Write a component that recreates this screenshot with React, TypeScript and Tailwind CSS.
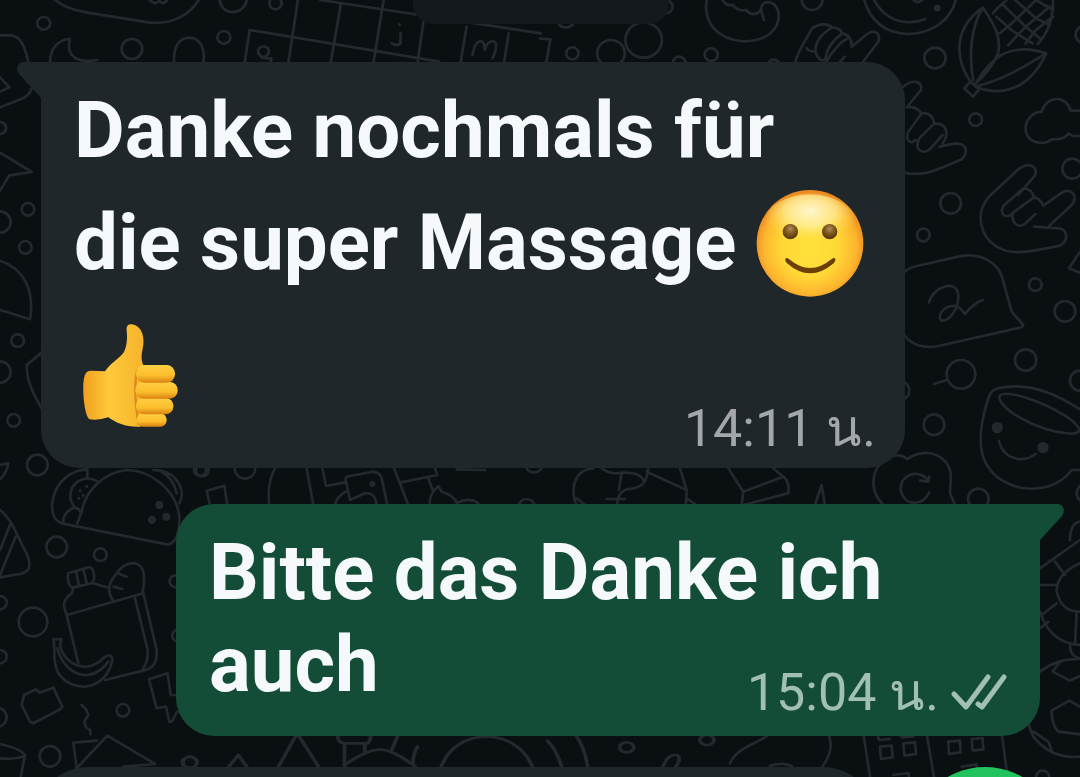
import type { ReactNode } from "react";

function Wallpaper() {
  return (
    <svg
      aria-hidden="true"
      viewBox="0 0 1080 777"
      preserveAspectRatio="xMidYMid slice"
      className="absolute inset-0 h-full w-full"
      fill="none"
      stroke="#23292c"
      strokeWidth="8"
      strokeLinecap="round"
      strokeLinejoin="round"
    >
      {/* top left: cloud, moon, crossword */}
      <g transform="matrix(.3444 0 0 .3333 0 0)">
        <path d="M155 -5 C180 20 210 30 250 37 L430 67 C500 75 555 45 582 -10 M435 2 L450 10 L462 4 L475 10 L485 2" />
        <path d="M0 106 H30 C65 108 75 150 83 190 M0 232 L27 262 L0 275 M0 322 L60 298 Q85 288 92 265 M0 458 L92 516 L27 526 L0 572" />
        <path d="M145 190 C145 145 170 118 203 117 C190 170 225 190 282 180 M505 190 C503 140 520 113 550 113 C585 115 597 150 590 190 M637 -5 C640 50 710 50 718 -5" />
        <circle cx="127" cy="70" r="19" />
        <circle cx="383" cy="147" r="30" />
        <circle cx="650" cy="112" r="19" />
        <circle cx="800" cy="10" r="18" />
        <circle cx="0" cy="384" r="18" />
        <path d="M710 190 L725 90 L1275 185 M865 0 L837 190 M990 10 L960 190 M1114 0 L1084 190 M930 0 L1570 100 M1230 62 L1213 185 M1355 80 L1337 190 M1477 100 L1463 190" />
        <path d="M785 190 L788 175 C740 180 740 135 770 140 C790 150 780 170 760 172 M1160 73 v2 M1163 100 V130 Q1150 140 1138 130 M1372 165 C1380 115 1408 110 1408 150 C1415 115 1445 118 1440 140 Q1440 155 1430 175" />
      </g>

      {/* top right: fist, hands, corn */}
      <g transform="matrix(.3444 0 0 .3333 540 0)">
        <path d="M0 115 L30 118 L18 190 M485 -5 C470 70 520 120 590 124 C660 125 700 85 692 35 C680 -5 640 0 642 30 L650 60 M530 0 Q540 18 560 15 Q575 35 598 30 Q620 55 642 30" />
        <path d="M740 190 C750 145 780 110 790 85 C810 70 835 70 848 82 Q870 82 878 100 Q905 105 905 140 L950 102 C975 85 990 105 982 125 L937 187 M848 82 C820 100 800 125 800 150 C795 160 775 150 775 145 M878 100 C850 120 830 150 830 175 C820 190 805 175 800 155 M905 140 M830 187 C850 150 875 125 890 118 M870 187 L885 170" />
        <path d="M940 -5 C960 70 1010 100 1070 102 C1140 100 1195 60 1208 -5 M970 0 C1000 60 1060 80 1118 58 M1085 0 Q1097 12 1110 0" />
        <circle cx="1153" cy="24" r="6" fill="#23292c" />
        <path d="M1250 245 C1200 170 1205 80 1286 23 C1320 75 1340 110 1330 160 Q1310 210 1265 250 M1258 240 C1245 170 1250 80 1286 23 M1265 250 C1300 190 1350 120 1470 160 C1420 270 1340 290 1270 262 M1270 258 C1340 240 1390 210 1470 160" />
        <path d="M1232 265 L1250 245 L1275 268 L1257 290 Z M1315 40 C1330 20 1345 10 1355 0 M1490 0 C1490 60 1470 105 1445 132 M1325 50 L1375 95 L1430 130 M1345 15 L1410 80 L1455 118 M1380 0 L1440 55 L1480 75 M1440 0 L1490 30 M1335 100 L1375 65 L1440 0 M1360 135 L1410 80 L1480 20 M1410 130 L1440 90 L1490 50" />
        <circle cx="75" cy="58" r="25" />
        <circle cx="94" cy="160" r="18" />
        <circle cx="206" cy="160" r="40" />
        <circle cx="301" cy="120" r="53" />
        <circle cx="365" cy="20" r="20" />
        <circle cx="404" cy="188" r="18" />
        <circle cx="497" cy="164" r="19" />
        <circle cx="679" cy="197" r="18" />
        <circle cx="790" cy="0" r="30" />
        <circle cx="1147" cy="174" r="31" />
        <circle cx="1580" cy="104" r="25" />
      </g>

      {/* right side: hands, speech bubble, cup */}
      <g transform="translate(880 60) scale(.3333)">
        <path d="M70 80 C100 55 130 65 123 90 L80 142 Q105 135 125 160 Q155 155 163 190 Q205 190 198 232 L188 250 M125 160 L85 215 C75 240 90 255 107 240 M163 190 L118 235 C100 270 130 285 150 267 L188 225 M70 338 C130 350 160 335 245 298 C270 270 255 250 225 250 L178 260" />
        <path d="M600 152 L572 152 C560 105 500 105 485 155 C430 160 420 230 465 245 Q495 255 515 238 Q555 240 565 220 Q575 230 600 228" />
        <path d="M325 412 L415 328 C450 300 480 325 462 350 L415 405 M325 412 C285 460 300 530 350 560 C390 585 430 580 540 557 C570 540 560 505 535 505 L462 500 M430 385 Q455 385 462 412 Q480 415 490 437 L550 395 C580 385 595 415 573 437 L508 497 M430 385 L370 438 C355 465 385 480 400 457 L462 412 M400 457 C390 485 415 510 437 490 L466 462" />
        <path d="M70 640 Q80 625 110 618 L235 590 C305 575 360 610 370 665 L395 755 L430 795 L425 802 L175 858 C120 868 90 850 70 822 M147 727 C160 680 230 655 235 705 C237 750 205 785 185 782 C170 770 190 735 225 738 Q240 740 255 762 Q280 730 308 720" />
        <path d="M162 972 L200 960 M355 985 C330 990 325 1010 312 1060 C290 1160 305 1210 350 1250 C430 1310 530 1290 575 1230 H600 M355 985 C440 965 530 1000 610 1055 M358 1010 C370 985 480 1020 560 1070 C610 1105 610 1125 560 1120 C470 1110 360 1050 358 1010 M357 1143 C370 1200 430 1210 467 1182 M600 575 L567 625 L600 638" />
        <circle cx="352" cy="1103" r="13" fill="#23292c" />
        <circle cx="489" cy="1163" r="13" fill="#23292c" />
        <path d="M35 1190 Q60 1180 82 1197 C140 1155 220 1190 212 1260 L210 1300 L225 1335 M35 1190 C-30 1215 -35 1290 10 1335 M147 1297 C135 1335 75 1345 62 1290 C60 1245 110 1225 145 1260 M120 1262 L145 1265 L148 1250" />
        <circle cx="287" cy="179" r="19" />
        <circle cx="577" cy="326" r="30" />
        <circle cx="212" cy="430" r="31" />
        <circle cx="130" cy="525" r="19" />
        <circle cx="466" cy="674" r="19" />
        <circle cx="555" cy="754" r="31" />
        <circle cx="437" cy="900" r="32" />
        <circle cx="243" cy="943" r="43" />
        <circle cx="600" cy="962" r="30" />
        <circle cx="162" cy="1094" r="31" />
        <circle cx="60" cy="992" r="28" />
        <circle cx="295" cy="1317" r="31" />
        <circle cx="618" cy="1300" r="28" />
      </g>

      {/* left edge */}
      <g transform="translate(0 50) scale(.3333)">
        <path d="M0 632 C70 655 105 720 90 808 L0 780 M125 908 L80 945 C80 1000 105 1040 125 1075" />
        <circle cx="84" cy="478" r="19" />
        <circle cx="76" cy="592" r="19" />
        <circle cx="53" cy="872" r="19" />
        <circle cx="41" cy="1111" r="19" />
        <circle cx="0" cy="516" r="32" />
        <circle cx="0" cy="966" r="32" />
      </g>

      {/* bottom left: taco, lunch bag, banana */}
      <g transform="translate(0 440) scale(.3333)">
        <path d="M0 75 L25 70 Q20 100 0 118 M0 210 C40 240 55 300 80 340 C95 380 90 395 60 402 L0 412 M30 255 L0 330 M47 290 L0 405" />
        <path d="M185 250 C140 235 150 150 200 110 Q225 90 262 88 V110 M185 250 L500 313 C530 315 540 270 538 230 C530 150 450 90 380 90 C300 100 255 160 245 215 L232 250 M295 125 C250 100 205 130 212 180 L225 205 M190 247 C185 220 230 185 240 215 M460 90 C530 90 560 150 538 190 M485 95 Q520 115 530 160 M240 152 v2 M260 138 v2 M237 174 v2 M250 165 v2" />
        <g fill="#23292c">
          <circle cx="478" cy="195" r="8" />
          <circle cx="456" cy="239" r="8" />
          <circle cx="499" cy="230" r="8" />
        </g>
        <path d="M205 400 L265 382 Q275 380 280 395 Q287 420 275 430 L218 443 Q205 440 203 410 Z M228 393 L237 437 M250 387 L260 430 M220 445 L215 460 C185 480 190 500 200 525 L235 670 M280 430 L330 445 M200 525 L430 460 L470 630 C472 670 460 685 430 692 L315 720 M405 475 L443 630 Q445 665 430 685 M338 480 C320 450 325 430 350 400 C375 360 430 355 432 410 Q433 440 427 460 M358 402 L380 410 M340 440 L367 447" />
        <path d="M160 598 L184 597 L180 615 C190 670 260 710 315 650 Q335 640 337 660 C320 750 220 765 175 700 C155 660 168 630 160 598 M172 625 C190 700 270 740 325 665" />
        <path d="M72 765 L108 748 L118 758 L160 743 L187 800 L180 808 L100 850 L90 845 L65 795 Z M245 795 L258 808 L265 825 L253 845 L258 862 L270 870 L272 883 M535 765 L512 765 L503 700 L447 718 L470 805 L498 800 L508 845 L515 845 L532 815" />
        <path d="M0 912 Q60 925 75 945 L62 1011 M0 955 Q40 960 75 948 M230 985 L220 908 L290 902 M230 985 L322 887 L465 972 M370 980 L465 972" />
        <circle cx="112" cy="75" r="31" />
        <circle cx="170" cy="321" r="31" />
        <circle cx="301" cy="344" r="19" />
        <circle cx="99" cy="546" r="43" />
        <circle cx="0" cy="488" r="20" />
        <circle cx="0" cy="650" r="20" />
        <circle cx="369" cy="811" r="19" />
        <circle cx="-8" cy="832" r="28" />
        <circle cx="150" cy="949" r="31" />
        <circle cx="527" cy="424" r="18" />
        <circle cx="535" cy="587" r="18" />
        <circle cx="570" cy="968" r="19" />
        <circle cx="600" cy="90" r="18" />
      </g>

      {/* strip between the messages */}
      <g transform="translate(180 450) scale(.3333)">
        <path d="M90 165 L80 122 L133 107 L142 165 M285 55 Q260 100 268 165 M380 55 L400 165 M427 55 L438 108 L495 97 M497 90 Q495 80 510 78 L580 65 Q600 68 605 85 L622 165 M497 90 L510 150 L555 130 Q585 125 590 165 M497 125 Q470 140 465 165 M642 55 L685 165 M662 97 L772 75 L765 55 M745 85 L757 118 M750 165 C745 130 770 115 775 108 L785 125 Q820 135 832 160 M832 158 Q870 140 895 160 M830 58 L915 60" />
        <path d="M1240 55 C1170 60 1175 140 1190 165 M1190 145 L1215 165 M1265 55 Q1290 75 1325 68 L1317 120 M1325 68 Q1380 65 1390 90 M1405 55 C1400 100 1385 115 1340 118 Q1310 130 1312 165 M1280 147 H1335 M1400 65 L1520 120 L1518 165 M1520 145 L1550 165 M1500 55 L1520 120 M1645 55 L1690 125 L1810 80 L1780 55 M1690 125 L1685 165 M1810 80 Q1830 95 1825 130 L1690 165 M1905 165 L1925 105 L1935 165" />
        <circle cx="67" cy="60" r="19" />
        <circle cx="195" cy="55" r="31" />
        <circle cx="577" cy="102" r="5" fill="#23292c" />
        <circle cx="1062" cy="42" r="26" />
        <circle cx="1040" cy="172" r="25" />
      </g>

      {/* bottom strip */}
      <g transform="matrix(.4719 0 0 .3333 0 700)">
        <path d="M485 200 L505 165 L523 200 M590 200 L630 100 L675 200 M730 200 V130 H773 V155 M715 100 Q715 130 730 130 M785 100 Q788 125 773 135 M730 195 Q775 150 805 148 Q835 150 880 200 M845 100 L830 150 M885 140 Q875 160 875 195 M935 200 C965 80 1095 80 1128 200 M1160 122 Q1180 150 1190 200 M1220 105 Q1240 145 1245 200 M1405 200 Q1415 160 1435 165 Q1445 175 1432 200" />
        <circle cx="402" cy="187" r="16" />
        <circle cx="1328" cy="142" r="15" />
        <circle cx="1498" cy="120" r="15" />
      </g>

      {/* bottom right: building, football, turtle */}
      <g transform="translate(730 640) scale(.3333)">
        <path d="M0 370 C20 320 90 310 120 280 M295 280 C310 320 300 350 270 390 M400 280 L420 411 M590 280 L612 411 M815 280 L830 390 M450 320 L485 317 L488 352 L453 357 Z M520 310 L555 307 L558 342 L523 347 Z M655 305 L690 302 L692 337 L657 342 Z M725 297 L758 294 L760 328 L728 332 Z M443 285 L447 300 L480 297 M512 285 L516 292 L550 289 M490 405 L535 399 L537 411 M695 380 L740 373 L742 390 M120 378 Q155 365 185 378" />
        <path d="M930 95 Q980 55 1050 57 M930 95 C880 150 880 230 910 290 C950 340 1000 355 1050 350 M968 95 L990 65 M968 95 L1020 122 L1050 108 M1018 182 L965 212 Q965 255 985 275 L1050 283 M1018 182 L1050 200 M910 275 L955 305 L968 338" />
        <path d="M930 -215 L1050 -300 M975 -235 L1005 -195 M930 -165 H980 M1050 -230 C990 -205 970 -160 985 -130 Q1000 -85 1050 -85 M980 -110 L935 -75 M930 -85 Q960 10 1050 15 M1040 -80 L1035 15 M1020 -300 Q1020 -350 1050 -355 M1020 15 Q1020 50 1050 55 M930 -35 L955 -55" />
        <circle cx="938" cy="412" r="20" />
      </g>
    </svg>
  );
}

function SmileEmoji() {
  return (
    <svg role="img" aria-label="🙂" viewBox="54 54 324 324" className="size-[108px]">
      <defs>
        <radialGradient id="face" cx=".5" cy=".54" r=".53">
          <stop offset="0" stopColor="#ffe13c" />
          <stop offset=".5" stopColor="#ffd936" />
          <stop offset=".82" stopColor="#fdb52d" />
          <stop offset="1" stopColor="#ea8a22" />
        </radialGradient>
        <radialGradient id="shine" cx=".5" cy=".3" r=".55">
          <stop offset="0" stopColor="#fff6cf" />
          <stop offset=".5" stopColor="#fff0a0" stopOpacity=".75" />
          <stop offset="1" stopColor="#ffe04a" stopOpacity="0" />
        </radialGradient>
        <radialGradient id="eye" cx=".5" cy=".32" r=".6">
          <stop offset="0" stopColor="#b58a5c" />
          <stop offset=".45" stopColor="#856022" />
          <stop offset="1" stopColor="#593a08" />
        </radialGradient>
      </defs>
      <circle cx="216" cy="217" r="160" fill="url(#face)" />
      <ellipse cx="216" cy="154" rx="134" ry="84" fill="url(#shine)" />
      <circle cx="157" cy="182" r="23" fill="url(#eye)" />
      <circle cx="275" cy="182" r="23" fill="url(#eye)" />
      <path
        d="M142 263 Q146 258 153 264 Q216 318 281 264 Q288 258 292 263 Q294 268 288 276 Q216 338 146 276 Q140 268 142 263Z"
        fill="#6b4005"
      />
    </svg>
  );
}

function ThumbsUpEmoji() {
  return (
    <svg
      role="img"
      aria-label="👍"
      viewBox="66 42 288 312"
      className="mt-[25px] mb-8 ml-2 h-[104px] w-24"
    >
      <defs>
        <linearGradient id="hand" x1="0" y1="0" x2="1" y2="0">
          <stop offset="0" stopColor="#f0a01f" />
          <stop offset=".4" stopColor="#ffc93a" />
          <stop offset="1" stopColor="#f3b02a" />
        </linearGradient>
        <linearGradient id="finger" x1="0" y1="0" x2="0" y2="1">
          <stop offset="0" stopColor="#ffcf43" />
          <stop offset=".6" stopColor="#fcbd2c" />
          <stop offset="1" stopColor="#d98212" />
        </linearGradient>
      </defs>
      <path
        d="M200 60 C198 42 213 40 226 46 C250 58 254 88 248 116 C243 140 244 150 250 166 L265 180 V335 L240 350 C200 352 170 340 145 322 Q115 332 88 328 C72 315 66 235 72 205 Q75 182 92 182 L135 184 C150 160 180 145 192 126 C202 104 202 84 200 60Z"
        fill="url(#hand)"
      />
      <path d="M232 180 Q218 235 236 345" stroke="#d98a18" strokeWidth="7" fill="none" />
      <g fill="url(#finger)">
        <rect x="230" y="310" width="90" height="40" rx="19" />
        <rect x="228" y="264" width="112" height="49" rx="23" />
        <rect x="226" y="216" width="127" height="50" rx="24" />
        <rect x="228" y="165" width="117" height="53" rx="25" />
      </g>
    </svg>
  );
}

function DoubleCheck() {
  return (
    <svg
      role="img"
      aria-label="Zugestellt"
      viewBox="0 0 56 40"
      className="h-10 w-14"
      fill="none"
      stroke="currentColor"
      strokeWidth="5"
      strokeLinecap="round"
      strokeLinejoin="round"
    >
      <path d="M3 21 L15 34 L37 4 M27 31 L31 34 L53 4" />
    </svg>
  );
}

interface BubbleProps {
  own?: boolean;
  children: ReactNode;
}

function Bubble({ own, children }: BubbleProps) {
  return (
    <article
      className={`relative w-full max-w-[864px] rounded-[38px] px-[33px] text-[78px] font-bold text-[#f6f9fb] ${
        own
          ? "ml-auto rounded-tr-none bg-[#144d37] pt-[23px] pb-3"
          : "rounded-tl-none bg-[#20272a] pt-[13px] pb-2"
      }`}
    >
      <svg
        aria-hidden="true"
        viewBox="0 0 24 36"
        className={`absolute top-0 h-9 w-6 ${
          own ? "left-full text-[#144d37]" : "right-full -scale-x-100 text-[#20272a]"
        }`}
      >
        <path d="M0 0 H17 C23 0 26 6 22 12 L0 36 Z" fill="currentColor" />
      </svg>
      {children}
    </article>
  );
}

export default function App() {
  return (
    <main className="relative h-screen overflow-hidden bg-[#0a0f12] font-['Roboto','Noto_Sans',sans-serif]">
      <Wallpaper />

      <div className="relative flex h-full flex-col pr-10 pl-[41px]">
        {/* date chip, scrolled almost out of view */}
        <div className="mx-auto h-6 w-64 shrink-0 rounded-b-[20px] bg-[#13191c]" />

        <div className="mt-[38px] flex flex-col gap-9">
          <Bubble>
            <p className="leading-[112px]">
              Danke nochmals für die super Massage{" "}
              <span className="inline-flex h-[112px] items-center align-top">
                <SmileEmoji />
              </span>
            </p>
            <div className="flex items-end justify-between">
              <ThumbsUpEmoji />
              <time className="-mr-1 text-[52px] leading-[62px] font-normal text-[#a3a7a9]">
                14:11 น.
              </time>
            </div>
          </Bubble>

          <Bubble own>
            {/* time floats into the end of the last line */}
            <p className="flow-root leading-[92px]">
              Bitte das Danke ich auch
              <span className="float-right mt-[43px] flex items-center gap-3 text-[52px] leading-[62px] font-normal text-[#a1c0b3]">
                <time>15:04 น.</time>
                <DoubleCheck />
              </span>
            </p>
          </Bubble>
        </div>

        {/* composer */}
        <form className="mt-[31px] -mr-5 -ml-2 flex shrink-0 gap-8">
          <input
            type="text"
            aria-label="Nachricht"
            className="h-28 min-w-0 flex-1 rounded-full bg-[#20272a] px-12 text-5xl text-white outline-none"
          />
          <button
            type="button"
            aria-label="Sprachnachricht"
            className="size-[150px] shrink-0 rounded-full bg-[#22c35e]"
          />
        </form>
      </div>
    </main>
  );
}
